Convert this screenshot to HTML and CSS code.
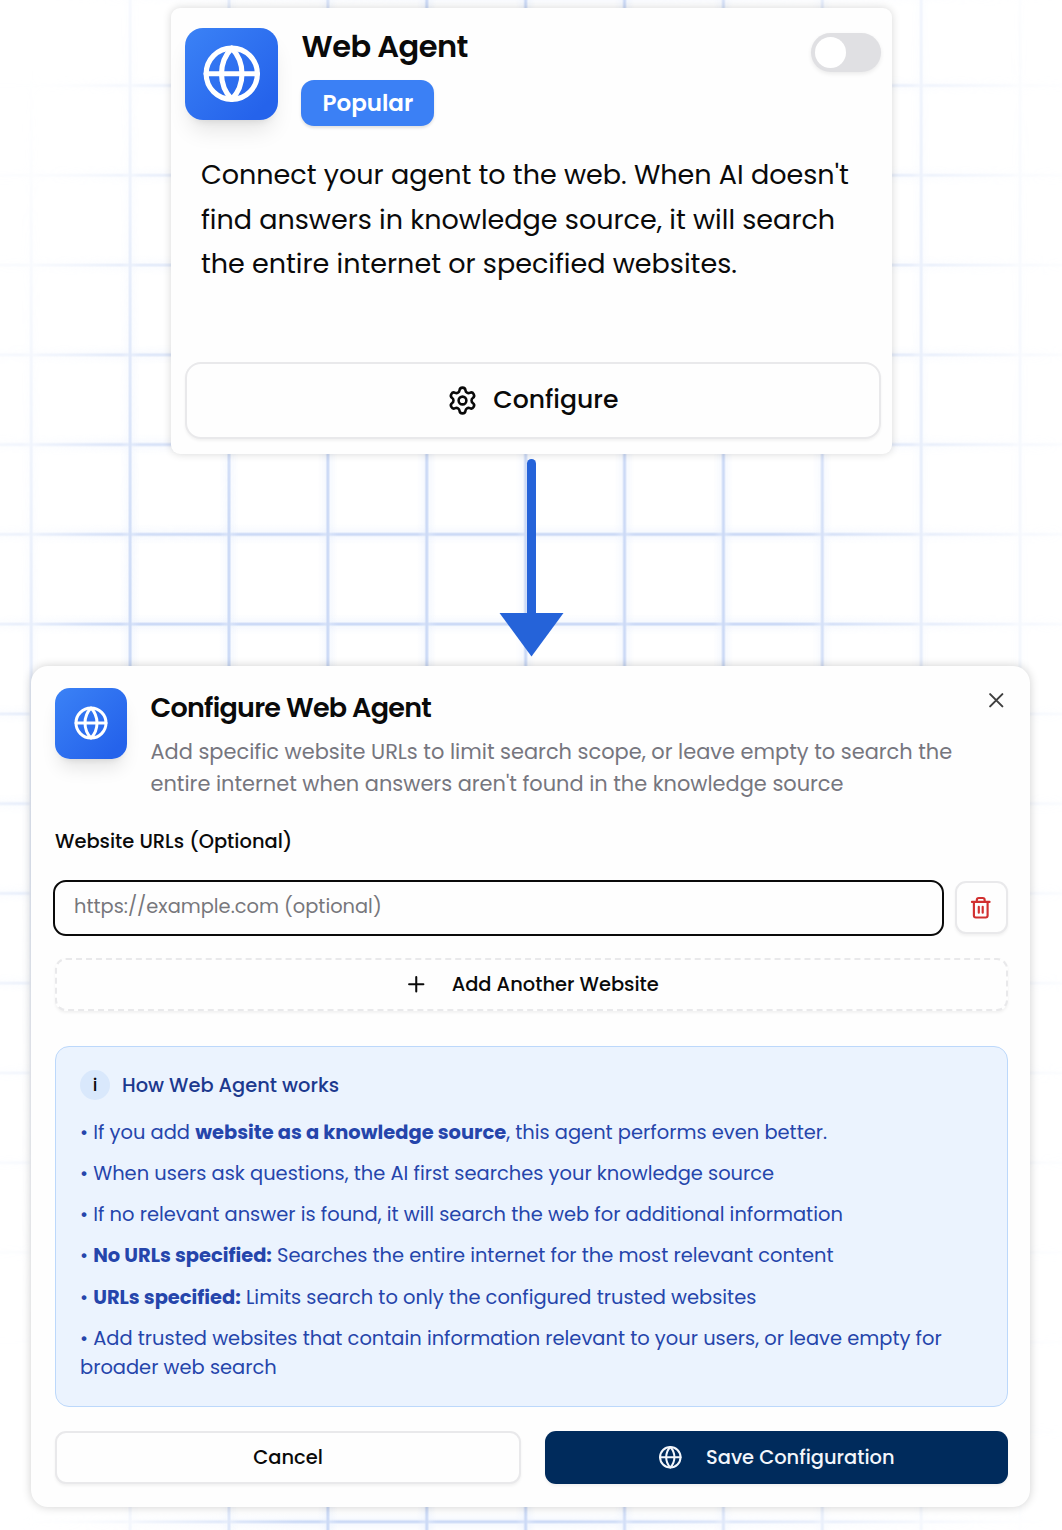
FILE: index.html
```html
<!DOCTYPE html>
<html lang="en">
<head>
<meta charset="utf-8">
<title>Web Agent</title>
<link rel="stylesheet" href="styles.css">
</head>
<body>
<svg class="defs" width="0" height="0" aria-hidden="true">
  <symbol id="globe" viewBox="0 0 24 24">
    <circle cx="12" cy="12" r="10"/>
    <path d="M12 2a14.5 14.5 0 0 0 0 20 14.5 14.5 0 0 0 0-20"/>
    <path d="M2 12h20"/>
  </symbol>
</svg>
<div class="backdrop"></div>
<main class="page">
  <section class="agent-card">
    <header class="agent-head">
      <div class="tile tile-lg"><svg class="icon"><use href="#globe"/></svg></div>
      <div class="agent-titles">
        <h2 class="agent-name">Web Agent</h2>
        <span class="badge">Popular</span>
      </div>
      <button class="toggle" role="switch" aria-checked="false" aria-label="Enable Web Agent"><span class="thumb"></span></button>
    </header>
    <p class="agent-text">
      <span class="line">Connect your agent to the web. When AI doesn't</span>
      <span class="line">find answers in knowledge source, it will search</span>
      <span class="line">the entire internet or specified websites.</span>
    </p>
    <button class="btn configure">
      <svg class="icon gear" viewBox="0 0 24 24"><path d="M9.671 4.136a2.34 2.34 0 0 1 4.659 0 2.34 2.34 0 0 0 3.319 1.915 2.34 2.34 0 0 1 2.33 4.033 2.34 2.34 0 0 0 0 3.831 2.34 2.34 0 0 1-2.33 4.033 2.34 2.34 0 0 0-3.319 1.915 2.34 2.34 0 0 1-4.659 0 2.34 2.34 0 0 0-3.32-1.915 2.34 2.34 0 0 1-2.33-4.033 2.34 2.34 0 0 0 0-3.831A2.34 2.34 0 0 1 6.35 6.051a2.34 2.34 0 0 0 3.319-1.915"/><circle cx="12" cy="12" r="3"/></svg>
      <span>Configure</span>
    </button>
  </section>

  <svg class="arrow" viewBox="0 0 64 212" width="64" height="212">
    <path class="arrow-shaft" d="M31.5 9.5V164"/>
    <path class="arrow-head" d="M-.5 159h64l-32 43.500z"/>
  </svg>

  <section class="dialog">
    <header class="dialog-head">
      <div class="tile tile-sm"><svg class="icon"><use href="#globe"/></svg></div>
      <div class="dialog-titles">
        <h2 class="dialog-name">Configure Web Agent</h2>
        <p class="dialog-text">
          <span class="line">Add specific website URLs to limit search scope, or leave empty to search the</span>
          <span class="line">entire internet when answers aren't found in the knowledge source</span>
        </p>
      </div>
      <button class="close" aria-label="Close"><svg class="icon" viewBox="0 0 24 24"><path d="M18 6 6 18M6 6l12 12"/></svg></button>
    </header>

    <label class="label" for="url">Website URLs (Optional)</label>
    <div class="url-row">
      <input class="url" id="url" type="text" placeholder="https://example.com (optional)">
      <button class="btn delete" aria-label="Remove"><svg class="icon" viewBox="0 0 24 24"><path d="M3 6h18M19 6v14a2 2 0 0 1-2 2H7a2 2 0 0 1-2-2V6M8 6V4a2 2 0 0 1 2-2h4a2 2 0 0 1 2 2v2M10 11v6M14 11v6"/></svg></button>
    </div>
    <button class="btn add"><svg class="icon" viewBox="0 0 24 24"><path d="M5 12h14M12 5v14"/></svg><span>Add Another Website</span></button>

    <div class="info">
      <div class="info-head"><span class="info-dot">i</span><span class="info-title">How Web Agent works</span></div>
      <ul class="info-list">
        <li>• If you add <b>website as a knowledge source</b>, this agent performs even better.</li>
        <li>• When users ask questions, the AI first searches your knowledge source</li>
        <li>• If no relevant answer is found, it will search the web for additional information</li>
        <li>• <b>No URLs specified:</b> Searches the entire internet for the most relevant content</li>
        <li>• <b>URLs specified:</b> Limits search to only the configured trusted websites</li>
        <li><span class="line">• Add trusted websites that contain information relevant to your users, or leave empty for</span> <span class="line">broader web search</span></li>
      </ul>
    </div>

    <footer class="actions">
      <button class="btn cancel">Cancel</button>
      <button class="btn save"><svg class="icon"><use href="#globe"/></svg><span>Save Configuration</span></button>
    </footer>
  </section>
</main>
</body>
</html>
```
FILE: styles.css
```css
* { box-sizing: border-box; }

body {
  margin: 0;
  background: #fff;
  color: #0a0a0a;
  font-family: Poppins, Inter, sans-serif;
}

h2, p, ul { margin: 0; padding: 0; }
ul { list-style: none; }
button, input { font: inherit; color: inherit; padding: 0; margin: 0; }
.defs { position: absolute; }
.line { display: block; white-space: nowrap; }

.icon {
  display: block;
  flex: none;
  fill: none;
  stroke: currentColor;
  stroke-width: 2;
  stroke-linecap: round;
  stroke-linejoin: round;
}

/* Grid behind the cards, faded towards the edges and the left corners */
.backdrop {
  position: absolute;
  inset: 0;
  height: 1530px;
  z-index: -1;
  background-image:
    linear-gradient(to right, transparent 0, #e9f0fd66 8.2px, #ccdaf6 8.8px, #ccdaf6 11.2px, #e9f0fd66 11.8px, transparent 20px),
    linear-gradient(to bottom, transparent 0, #e9f0fd66 8.2px, #ccdaf6 8.8px, #ccdaf6 11.2px, #e9f0fd66 11.8px, transparent 20px);
  background-size: 98.9px 89.77px;
  background-position: 21.2px 75.5px;
  mask-image:
    radial-gradient(700px 1750px at 430px 700px, #000 50%, #0009 64%, #0004 80%, #0001 92%, transparent 100%),
    radial-gradient(420px 640px at 0 0, transparent 12%, #000 100%),
    radial-gradient(300px 560px at 0 1440px, transparent 15%, #000 100%),
    linear-gradient(to right, #0008 0, #0009 40px, #000 130px);
  mask-composite: intersect;
}

.page {
  display: flex;
  flex-direction: column;
  align-items: flex-start;
  width: 1062px;
  height: 1530px;
  padding-top: 8px;
  overflow: hidden;
}

/* Agent card */
.agent-card {
  display: flex;
  flex-direction: column;
  width: 721px;
  height: 446px;
  margin-left: 170.5px;
  padding: 20px 11px 15.5px 14.7px;
  border-radius: 9px;
  background: #fefefe;
  box-shadow: 0 0 9px rgba(0, 0, 0, .16);
}

.agent-head { display: flex; align-items: flex-start; height: 98px; }

.tile {
  display: grid;
  place-items: center;
  flex: none;
  color: #fff;
  background: linear-gradient(135deg, #3b82f6, #2563eb 85%);
}
.tile-lg {
  width: 92.5px;
  height: 92.4px;
  border-radius: 18px;
  box-shadow: 0 15px 22px -5px rgba(0, 0, 0, .1), 0 6px 9px -6px rgba(0, 0, 0, .12);
}
.tile-lg .icon { width: 61.5px; height: 61.5px; margin-top: -1px; }

.agent-titles { display: flex; flex-direction: column; align-items: flex-start; margin-left: 23.3px; }
.agent-name { font-size: 30.5px; font-weight: 600; line-height: 37px; letter-spacing: -.55px; margin-left: .5px; }
.badge {
  display: flex;
  align-items: center;
  height: 46px;
  width: 133.5px;
  margin-top: 15px;
  padding: 0 0 1px 21.5px;
  border-radius: 13px;
  background: #3b80f5;
  color: #fff;
  font-size: 23px;
  font-weight: 600;
  box-shadow: 0 2px 3px rgba(0, 0, 0, .12);
}

.toggle {
  display: flex;
  align-items: center;
  width: 69.5px;
  height: 39px;
  margin: 5px 0 0 auto;
  padding-left: 3.5px;
  border: 0;
  border-radius: 20px;
  background: #e0e0e3;
  box-shadow: 0 2px 4px rgba(0, 0, 0, .08);
}
.thumb { width: 31px; height: 31px; border-radius: 50%; background: #fff; }

.agent-text { margin: 27.2px 0 0 15.7px; font-size: 27.03px; line-height: 44.4px; }

.btn {
  display: flex;
  align-items: center;
  justify-content: center;
  border: 2px solid #e9e9eb;
  border-radius: 11px;
  background: #fefefe;
  font-weight: 500;
  font-size: 19.45px;
  box-shadow: 0 2px 3px rgba(0, 0, 0, .05);
}

.configure {
  gap: 15px;
  height: 77px;
  margin-top: auto;
  border-radius: 16px;
  font-size: 25.1px;
}
.configure span { margin-top: -.5px; }
.gear { width: 31px; height: 31px; }

/* Arrow from the card to the dialog */
.arrow { display: block; flex: none; margin-left: 500px; overflow: visible; }
.arrow-shaft { stroke: #2563d9; stroke-width: 9; stroke-linecap: round; }
.arrow-head { fill: #2563d9; }

/* Dialog */
.dialog {
  display: flex;
  flex-direction: column;
  flex: none;
  width: 999px;
  height: 840.5px;
  margin-left: 30.5px;
  padding: 22px 22px 22.5px 24.5px;
  border-radius: 17px;
  background: #fefefe;
  box-shadow: 0 0 10px rgba(0, 0, 0, .19);
}
.dialog-head { display: flex; align-items: flex-start; height: 112px; }
.tile-sm {
  width: 71.5px;
  height: 70.5px;
  border-radius: 15px;
  box-shadow: 0 13px 18px -4px rgba(0, 0, 0, .1), 0 5px 7px -5px rgba(0, 0, 0, .12);
}
.tile-sm .icon { width: 36px; height: 36px; }
.dialog-titles { margin-left: 24px; padding-top: 2px; }
.dialog-name { font-size: 27px; font-weight: 600; line-height: 36px; letter-spacing: -.73px; }
.dialog-text { margin-top: 10px; color: #76767e; font-size: 20.92px; line-height: 32.2px; }
.close { width: 24.5px; height: 24.5px; margin: -.5px -1px 0 auto; border: 0; background: none; color: #404040; }
.close .icon { width: 24.5px; height: 24.5px; }

.label { margin-top: 26.5px; font-size: 19.45px; font-weight: 500; line-height: 30px; }

.url-row { display: flex; align-items: center; gap: 11px; margin: 23.4px 0 0 -2px; }
.url {
  flex: 1;
  height: 56px;
  padding: 0 19px 2px;
  border: 2px solid #0a0a0a;
  border-radius: 13px;
  background: #fefefe;
  font-size: 19.4px;
  outline: 0;
}
.url::placeholder { color: #77777c; opacity: 1; }
.delete { width: 53px; height: 53px; color: #d13030; }
.delete .icon { width: 23.5px; height: 23.5px; stroke-width: 2.2; }

.add { gap: 23.5px; height: 53px; margin-top: 22px; border-style: dashed; }
.add .icon { width: 24.5px; height: 24.5px; }

.info {
  height: 361px;
  margin-top: 35.6px;
  padding: 23px 24px 0;
  border: 1.5px solid #bcd8fb;
  border-radius: 14px;
  background: #ebf3fe;
}
.info-head { display: flex; align-items: center; gap: 12px; height: 30px; color: #1c398e; font-size: 19.4px; font-weight: 500; }
.info-dot {
  display: grid;
  place-items: center;
  width: 30px;
  height: 30px;
  border-radius: 50%;
  background: #d9e8fc;
  color: #0a0a0a;
  font-size: 17.5px;
}
.info-list {
  display: flex;
  flex-direction: column;
  gap: 11.75px;
  margin-top: 17.5px;
  color: #2545ab;
  font-size: 19.45px;
  line-height: 29.4px;
  white-space: nowrap;
}
.info-list b { font-weight: 700; }

.actions { display: flex; gap: 24px; margin-top: auto; }
.actions .btn { height: 53px; padding-bottom: 1px; }
.cancel { width: 466px; }
.actions .save { flex: 1; gap: 23.5px; border: 0; background: #002b5c; color: #f3f6fb; }
.save .icon { width: 24.6px; height: 24.6px; }
```
